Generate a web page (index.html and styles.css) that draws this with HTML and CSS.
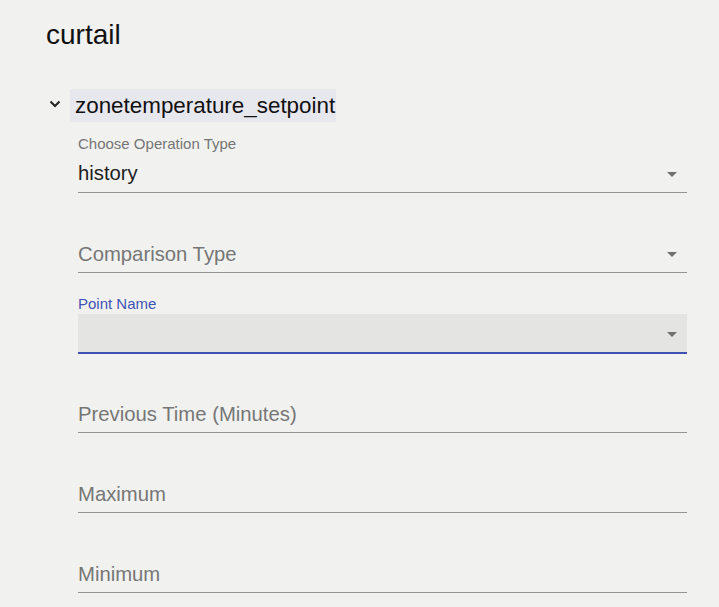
FILE: index.html
```html
<!DOCTYPE html>
<html>
<head>
<meta charset="utf-8">
<link rel="stylesheet" href="styles.css">
</head>
<body>
<div class="page">
  <h1 class="title">curtail</h1>
  <div class="panel">
    <div class="panel-header">
      <svg class="chevron" width="12" height="8" viewBox="0 0 12 8"><polyline points="1.5,1.5 6,6 10.5,1.5" fill="none" stroke="#222" stroke-width="2"/></svg>
      <span class="panel-title">zonetemperature_setpoint</span>
    </div>
    <div class="panel-body">
      <div class="field">
        <div class="label">Choose Operation Type</div>
        <div class="control"><span class="value">history</span><span class="arrow"></span></div>
      </div>
      <div class="field">
        <div class="label"></div>
        <div class="control"><span class="value placeholder">Comparison Type</span><span class="arrow"></span></div>
      </div>
      <div class="field focused">
        <div class="label">Point Name</div>
        <div class="control"><span class="value"></span><span class="arrow"></span></div>
      </div>
      <div class="field">
        <div class="label"></div>
        <div class="control"><span class="value placeholder">Previous Time (Minutes)</span></div>
      </div>
      <div class="field">
        <div class="label"></div>
        <div class="control"><span class="value placeholder">Maximum</span></div>
      </div>
      <div class="field">
        <div class="label"></div>
        <div class="control"><span class="value placeholder">Minimum</span></div>
      </div>
    </div>
  </div>
</div>
</body>
</html>
```

FILE: styles.css
```css
html, body {
  margin: 0;
  padding: 0;
  background: #f1f2f0;
  font-family: "Liberation Sans", Arial, sans-serif;
}
.page {
  padding: 19px 0 0 46px;
}
.title {
  margin: 0;
  font-size: 28px;
  line-height: 32px;
  font-weight: normal;
  color: #111;
}
.panel {
  margin-top: 38px;
}
.panel-header {
  display: flex;
  align-items: center;
  margin-left: 3px;
  gap: 9px;
}
.chevron {
  margin-bottom: 4px;
  display: block;
}
.panel-title {
  background: #e7e7ee;
  font-size: 22.4px;
  line-height: 33px;
  padding: 0 1px 0 5px;
  color: #111;
}
.panel-body {
  margin-top: 12px;
  margin-left: 32px;
  width: 609px;
}
.field {
  margin-bottom: 21px;
}
.label {
  height: 20px;
  font-size: 15px;
  line-height: 20px;
  color: #757575;
}
.control {
  display: flex;
  box-sizing: border-box;
  padding-top: 7px;
  border-bottom: 1px solid #949494;
  height: 39px;
}
.value {
  flex: 1;
  font-size: 20.3px;
  line-height: 24px;
  color: #1e1e1e;
}
.placeholder {
  color: #767676;
  margin-top: 1px;
}
.arrow {
  width: 0;
  height: 0;
  border-left: 5px solid transparent;
  border-right: 5px solid transparent;
  border-top: 5px solid #6f6f6f;
  margin-top: 11px;
  margin-right: 10px;
}
.focused .label {
  color: #3f51b5;
}
.focused .control {
  background: #e4e5e3;
  border-bottom: 2px solid #3f51b5;
  height: 40px;
}
.focused {
  margin-bottom: 20px;
}
```
